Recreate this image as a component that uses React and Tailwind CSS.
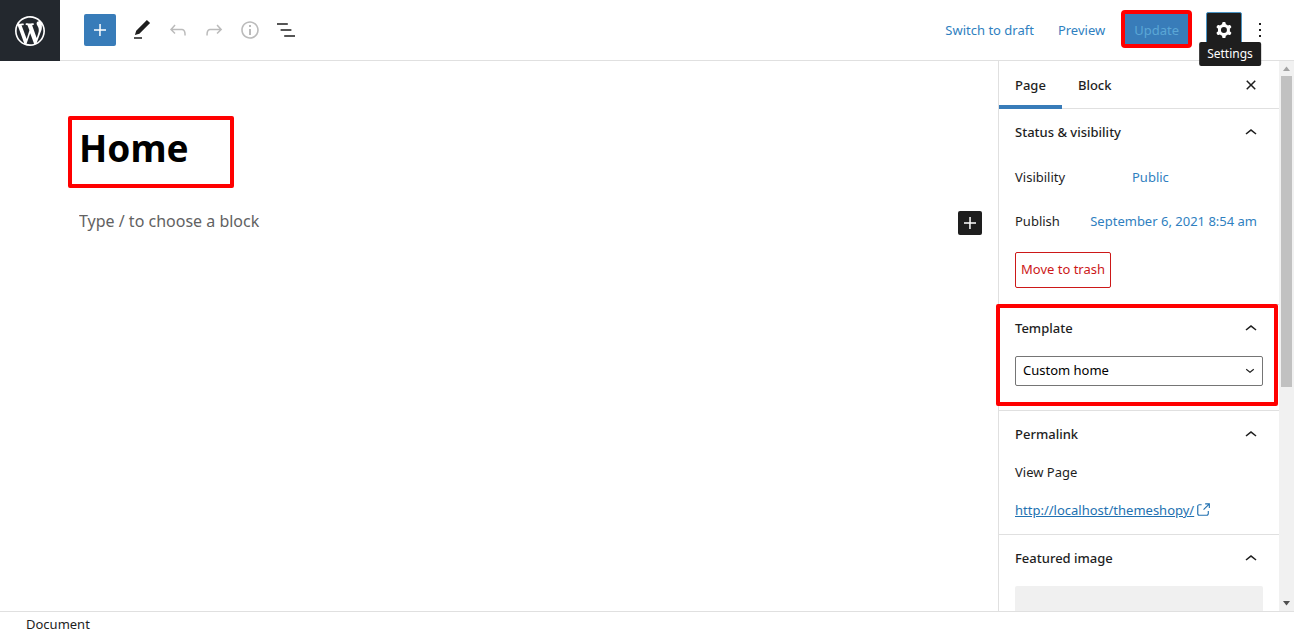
import { useState } from "react"
import clsx from "clsx"

const icons = {
  wordpress:
    "M20 10c0-5.51-4.49-10-10-10C4.48 0 0 4.49 0 10c0 5.52 4.48 10 10 10 5.51 0 10-4.48 10-10zM7.78 15.37L4.37 6.22c.55-.02 1.17-.08 1.17-.08.5-.06.44-1.13-.06-1.11 0 0-1.45.11-2.37.11-.18 0-.37 0-.58-.01C4.12 2.69 6.87 1.11 10 1.11c2.33 0 4.45.87 6.05 2.34-.68-.11-1.65.39-1.65 1.58 0 .74.45 1.36.9 2.1.35.61.55 1.36.55 2.46 0 1.49-1.4 5-1.4 5l-3.03-8.37c.54-.02.82-.17.82-.17.5-.05.44-1.25-.06-1.22 0 0-1.44.12-2.38.12-.87 0-2.33-.12-2.33-.12-.5-.03-.56 1.2-.06 1.22l.92.08 1.26 3.41zM17.41 10c.24-.64.74-1.87.43-4.25.7 1.29 1.05 2.71 1.05 4.25 0 3.29-1.73 6.24-4.4 7.78.97-2.59 1.94-5.2 2.92-7.78zM6.1 18.09C3.12 16.65 1.11 13.53 1.11 10c0-1.3.23-2.48.72-3.59C3.25 10.3 4.67 14.2 6.1 18.09zm4.03-6.63l2.58 6.98c-.86.29-1.76.45-2.71.45-.79 0-1.57-.11-2.29-.33.81-2.38 1.62-4.74 2.42-7.1z",
  plus: "M18 11.2h-5.2V6h-1.5v5.2H6v1.5h5.2V18h1.5v-5.2H18z",
  edit: "M20.1 5.1L16.9 2 6.2 12.7l-1.3 4.4 4.5-1.3L20.1 5.1zM4 20.8h8v-1.5H4v1.5z",
  undo: "M18.3 11.7c-.6-.6-1.4-.9-2.3-.9H6.7l2.9-3.3-1.1-1-4.5 5L8.5 16l1-1-2.7-2.7H16c.5 0 .9.2 1.3.5 1 1 1 3.4 1 4.5v.3h1.5v-.2c0-1.5 0-4.3-1.5-5.7z",
  redo: "M15.6 6.5l-1.1 1 2.9 3.3H8c-.9 0-1.7.3-2.3.9-1.4 1.5-1.4 4.2-1.4 5.6v.2h1.5v-.3c0-1.1 0-3.5 1-4.5.3-.3.7-.5 1.3-.5h9.2L14.5 15l1.1 1.1 4.6-4.6-4.6-5z",
  info: "M12 3.2c-4.8 0-8.8 3.9-8.8 8.8 0 4.8 3.9 8.8 8.8 8.8 4.8 0 8.8-3.9 8.8-8.8 0-4.8-4-8.8-8.8-8.8zm0 16c-4 0-7.2-3.3-7.2-7.2C4.8 8 8 4.8 12 4.8s7.2 3.3 7.2 7.2c0 4-3.2 7.2-7.2 7.2zM11 17h2v-6h-2v6zm0-8h2V7h-2v2z",
  listView: "M13.8 5.2H3v1.5h10.8V5.2zm-3.6 12v1.5H21v-1.5H10.2zm7.2-6H6.6v1.5h10.8v-1.5z",
  cog: "M10.289 4.836A1 1 0 0111.275 4h1.306a1 1 0 01.987.836l.244 1.466c.787.26 1.503.679 2.108 1.218l1.393-.522a1 1 0 011.216.437l.653 1.13a1 1 0 01-.23 1.273l-1.148.944a6.025 6.025 0 010 2.435l1.149.946a1 1 0 01.23 1.272l-.653 1.13a1 1 0 01-1.216.437l-1.394-.522c-.605.54-1.32.958-2.108 1.218l-.244 1.466a1 1 0 01-.987.836h-1.306a1 1 0 01-.986-.836l-.244-1.466a5.995 5.995 0 01-2.108-1.218l-1.394.522a1 1 0 01-1.217-.436l-.653-1.131a1 1 0 01.23-1.272l1.149-.946a6.026 6.026 0 010-2.435l-1.148-.944a1 1 0 01-.23-1.272l.653-1.131a1 1 0 011.217-.437l1.393.522a5.994 5.994 0 012.108-1.218l.244-1.466zM14.929 12a3 3 0 11-6 0 3 3 0 016 0z",
  more: "M13 19h-2v-2h2v2zm0-6h-2v-2h2v2zm0-6h-2V5h2v2z",
  close:
    "M12 13.06l3.712 3.713 1.061-1.06L13.061 12l3.712-3.712-1.06-1.06L12 10.938 8.288 7.227l-1.061 1.06L10.939 12l-3.712 3.712 1.06 1.061L12 13.061z",
  chevronUp: "M6.5 12.4L12 8l5.5 4.4-.9 1.2L12 10l-4.5 3.6-1-1.2z",
  chevronDown: "M17.5 11.6L12 16l-5.5-4.4.9-1.2L12 14l4.5-3.6 1 1.2z",
  external:
    "M18.2 17c0 .7-.6 1.2-1.2 1.2H7c-.7 0-1.2-.6-1.2-1.2V7c0-.7.6-1.2 1.2-1.2h3.2V4.2H7C5.5 4.2 4.2 5.5 4.2 7v10c0 1.5 1.2 2.8 2.8 2.8h10c1.5 0 2.8-1.2 2.8-2.8v-3.6h-1.5V17zM14.9 3v1.5h3.7l-6.4 6.4 1.1 1.1 6.4-6.4v3.7h1.5V3h-6.3z",
}

const Icon = ({ name, className = "h-6 w-6", viewBox = "0 0 24 24" }) => (
  <svg className={className} viewBox={viewBox} fill="currentColor" fillRule="evenodd" aria-hidden="true">
    <path d={icons[name]} />
  </svg>
)

const ToolButton = ({ icon, label, disabled }) => (
  <button
    type="button"
    aria-label={label}
    disabled={disabled}
    className="flex h-9 w-9 items-center justify-center text-[#1e1e1e] disabled:text-[#bbbbbb]"
  >
    <Icon name={icon} />
  </button>
)

const Panel = ({ title, children }) => {
  const [open, setOpen] = useState(true)

  return (
    <section className="relative border-b border-[#e0e0e0] px-4">
      <h2>
        <button
          type="button"
          aria-expanded={open}
          onClick={() => setOpen(!open)}
          className="flex h-12 w-full items-center justify-between font-medium"
        >
          {title}
          <Icon name={open ? "chevronUp" : "chevronDown"} />
        </button>
      </h2>
      {open && children}
    </section>
  )
}

const Header = () => (
  <header className="flex shrink-0 items-center justify-between border-b border-[#e0e0e0] pr-4">
    <div className="flex items-center">
      <a href="#dashboard" aria-label="View Pages" className="-mb-px flex h-[61px] w-15 items-center justify-center bg-[#23282e] text-white">
        <Icon name="wordpress" viewBox="-2 -2 24 24" className="h-9 w-9" />
      </a>
      <button
        type="button"
        aria-label="Add block"
        className="mr-2 ml-6 flex h-8 w-8 items-center justify-center rounded-xs bg-[#387cb9] text-white"
      >
        <Icon name="plus" />
      </button>
      <ToolButton icon="edit" label="Tools" />
      <ToolButton icon="undo" label="Undo" disabled />
      <ToolButton icon="redo" label="Redo" disabled />
      <ToolButton icon="info" label="Details" disabled />
      <ToolButton icon="listView" label="List view" />
    </div>

    <div className="flex items-center">
      <button type="button" className="h-9 px-3 pt-0.5 text-[#2f7fbf]">
        Switch to draft
      </button>
      <button type="button" className="h-9 px-3 pt-0.5 text-[#2f7fbf]">
        Preview
      </button>
      <button
        type="button"
        disabled
        className="mr-3.5 mb-0.5 ml-1 h-[38px] rounded-sm border-4 border-[#ff0000] bg-[#387cb9] px-[9px] pt-1 text-[#5ba7d6]"
      >
        Update
      </button>
      <div className="relative">
        <button
          type="button"
          aria-label="Settings"
          aria-describedby="settings-tip"
          className="flex h-9 w-9 items-center justify-center rounded-xs border border-[#4a94c4] bg-[#1e1e1e] text-white"
        >
          <Icon name="cog" />
        </button>
        <span
          id="settings-tip"
          role="tooltip"
          className="absolute top-[30px] left-1/2 z-10 ml-1.5 -translate-x-1/2 rounded-xs bg-[#1e1e1e] px-2 py-1 text-xs text-white"
        >
          Settings
        </span>
      </div>
      <ToolButton icon="more" label="Options" />
    </div>
  </header>
)

const Editor = () => (
  <main className="min-w-0 flex-1 pt-[55px] pr-4 pl-[79px]">
    <div className="relative">
      <h1 className="text-[37px] leading-16 font-bold text-black">Home</h1>
      <div className="absolute top-0 -left-[11px] h-[72px] w-[166px] rounded-xs border-4 border-[#ff0000]" />
    </div>
    <div className="mt-[31px] flex items-start gap-4">
      <input
        type="text"
        aria-label="Empty block; start writing or type forward slash to choose a block"
        placeholder="Type / to choose a block"
        className="h-5 min-w-0 flex-1 text-base leading-5 outline-none placeholder:text-[#626262]"
      />
      <button
        type="button"
        aria-label="Add block"
        className="flex h-6 w-6 items-center justify-center rounded-xs bg-[#1e1e1e] text-white"
      >
        <Icon name="plus" />
      </button>
    </div>
  </main>
)

const Sidebar = () => {
  const [tab, setTab] = useState("Page")

  return (
    <aside className="w-[281px] shrink-0 border-l border-[#e0e0e0]">
      <div className="flex h-12 items-center border-b border-[#e0e0e0] pr-4">
        {["Page", "Block"].map((name) => (
          <button
            key={name}
            type="button"
            onClick={() => setTab(name)}
            className={clsx(
              "-mb-px h-12 border-b-4 px-4 pt-1.5 font-medium",
              tab === name ? "border-[#387cb9]" : "border-transparent",
            )}
          >
            {name}
          </button>
        ))}
        <button type="button" aria-label="Close settings" className="ml-auto">
          <Icon name="close" />
        </button>
      </div>

      <Panel title="Status & visibility">
        <div className="flex flex-col gap-2 pt-[3px] pb-4">
          <div className="flex h-9 items-center">
            <span className="w-[117px]">Visibility</span>
            <button type="button" className="text-[#2f7fbf]">
              Public
            </button>
          </div>
          <div className="flex h-9 items-center justify-between pr-1.5">
            <span>Publish</span>
            <button type="button" className="text-[#2f7fbf]">
              September 6, 2021 8:54 am
            </button>
          </div>
          <button type="button" className="mt-1 h-9 self-start rounded-xs border border-[#cc1818] px-[5px] text-[#cc1818]">
            Move to trash
          </button>
        </div>
      </Panel>

      <Panel title="Template">
        <div className="relative pt-[3px] pb-6">
          <select
            aria-label="Template"
            className="block h-[30px] w-full appearance-none rounded-xs border border-[#757575] bg-white px-[7px] text-black"
          >
            <option>Custom home</option>
            <option>Default template</option>
          </select>
          <Icon name="chevronDown" className="pointer-events-none absolute top-2 right-1 h-[18px] w-[18px]" />
        </div>
        <div className="pointer-events-none absolute -top-px right-px bottom-1 -left-[3px] rounded-xs border-4 border-[#ff0000]" />
      </Panel>

      <Panel title="Permalink">
        <div className="flex flex-col gap-[18px] pt-[3px] pb-[14px]">
          <h3 className="leading-5">View Page</h3>
          <a href="#page" className="flex items-center leading-5 text-[#2271b1]">
            <span className="underline">http://localhost/themeshopy/</span>
            <Icon name="external" className="h-[18px] w-[18px]" />
          </a>
        </div>
      </Panel>

      <Panel title="Featured image">
        <div className="pt-[3px] pb-4">
          <button type="button" aria-label="Set featured image" className="block h-20 w-full rounded-xs bg-[#f0f0f0]" />
        </div>
      </Panel>
    </aside>
  )
}

const Scrollbar = () => (
  <div aria-hidden="true" className="flex w-[15px] shrink-0 flex-col items-center bg-[#f1f1f1]">
    <svg className="h-[15px] w-[15px] shrink-0" viewBox="0 0 15 15" fill="#a3a3a3">
      <path d="M7.5 5.5L11 10H4z" />
    </svg>
    <div className="h-[311px] w-[11px] bg-[#c1c1c1]" />
    <svg className="mt-auto h-[15px] w-[15px] shrink-0" viewBox="0 0 15 15" fill="#505050">
      <path d="M7.5 9.5L4 5h7z" />
    </svg>
  </div>
)

export default function App() {
  return (
    <div className="flex h-screen flex-col overflow-hidden bg-white font-['Noto_Sans','Open_Sans',sans-serif] text-[13px] text-[#1e1e1e]">
      <Header />
      <div className="flex min-h-0 flex-1 overflow-hidden">
        <Editor />
        <Sidebar />
        <Scrollbar />
      </div>
      <footer className="h-[25px] shrink-0 border-t border-[#e0e0e0] px-[26px] leading-6">Document</footer>
    </div>
  )
}
